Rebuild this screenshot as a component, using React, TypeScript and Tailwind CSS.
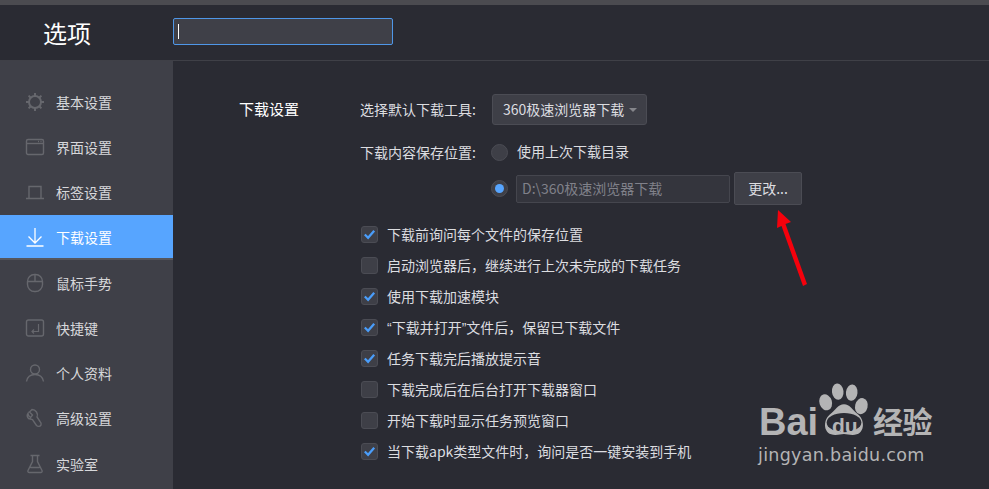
import type { ReactNode } from 'react'

const iconClass = 'w-[20px] h-[20px] text-[#66676d]'

function Svg({ children }: { children: ReactNode }) {
  return (
    <svg viewBox="0 0 20 20" fill="none" stroke="currentColor" strokeWidth="1.4" className={iconClass}>
      {children}
    </svg>
  )
}

const menu: { label: string; icon: ReactNode; active?: boolean }[] = [
  {
    label: '基本设置',
    icon: (
      <Svg>
        <circle cx="10" cy="10" r="6" strokeWidth="2" />
        <path d="M10 1v3M10 16v3M1 10h3M16 10h3M3.600 3.600l2.100 2.100M14.300 14.300l2.100 2.100M3.600 16.400l2.100-2.100M14.300 5.700l2.100-2.100" strokeWidth="2" />
      </Svg>
    ),
  },
  {
    label: '界面设置',
    icon: (
      <Svg>
        <rect x="1.500" y="2.500" width="17" height="15" rx="1.500" />
        <path d="M1.500 6.500h17" />
        <path d="M13 4.500h1M15.500 4.500h1" />
      </Svg>
    ),
  },
  {
    label: '标签设置',
    icon: (
      <Svg>
        <path d="M4 16V4.500h12V16M1 16.500h18" />
      </Svg>
    ),
  },
  {
    label: '下载设置',
    active: true,
    icon: (
      <svg viewBox="0 0 20 20" fill="none" stroke="currentColor" strokeWidth="1.300" className="w-[20px] h-[20px] text-white">
        <path d="M10 1v15M3.500 9.500l6.500 6.500 6.500-6.500M1.500 19h17" />
      </svg>
    ),
  },
  {
    label: '鼠标手势',
    icon: (
      <Svg>
        <rect x="2.500" y="1.500" width="15" height="17" rx="7" />
        <path d="M2.500 8.500h15M10 1.500v7" />
      </Svg>
    ),
  },
  {
    label: '快捷键',
    icon: (
      <Svg>
        <rect x="1.500" y="2" width="17" height="16" rx="2" />
        <path d="M13.500 6v7.500H7M9 11.500l-2 2 2 2" strokeWidth="1.200" />
      </Svg>
    ),
  },
  {
    label: '个人资料',
    icon: (
      <Svg>
        <circle cx="10" cy="6.500" r="4.500" />
        <path d="M1.500 18.500c.8-4.500 4-7 8.500-7s7.700 2.500 8.500 7" />
      </Svg>
    ),
  },
  {
    label: '高级设置',
    icon: (
      <Svg>
        <path d="M7 1.500 4.500 4l3 3-2 2.500C4 8.500 3 7 3 5.500 2 7 2 9 3.500 10.500l4 1 4 6c1.500 1.500 4 1 4.500-.5.500-1.500 0-2.500-1-3.500l-3-4.500c1-2 .5-3.500-.5-5C10.500 2.500 9 1.500 7 1.500Z" />
      </Svg>
    ),
  },
  {
    label: '实验室',
    icon: (
      <Svg>
        <path d="M5.500 1.500h9M7.500 1.500v6L3 16.500c-.5 1 .2 2 1.200 2h11.600c1 0 1.700-1 1.200-2L12.500 7.500v-6M5.500 13.500h9" />
      </Svg>
    ),
  },
]

const quote = "font-['Liberation_Sans',sans-serif]"

const options: { label: ReactNode; checked: boolean }[] = [
  { label: '下载前询问每个文件的保存位置', checked: true },
  { label: '启动浏览器后，继续进行上次未完成的下载任务', checked: false },
  { label: '使用下载加速模块', checked: true },
  {
    label: (
      <>
        <span className={quote}>“</span>下载并打开<span className={quote}>”</span>文件后，保留已下载文件
      </>
    ),
    checked: true,
  },
  { label: '任务下载完后播放提示音', checked: true },
  { label: '下载完成后在后台打开下载器窗口', checked: false },
  { label: '开始下载时显示任务预览窗口', checked: false },
  { label: '当下载apk类型文件时，询问是否一键安装到手机', checked: true },
]

function Radio({ selected }: { selected?: boolean }) {
  return (
    <span className="w-[17px] h-[17px] rounded-full bg-[#3e3f47] border border-[#4b4c54] flex items-center justify-center shrink-0">
      {selected && <span className="w-[9px] h-[9px] rounded-full bg-[#57a5ff]" />}
    </span>
  )
}

function Checkbox({ checked }: { checked: boolean }) {
  return (
    <span className="w-[17px] h-[17px] rounded-[3px] bg-[#3e3f47] border border-[#4b4c54] flex items-center justify-center shrink-0">
      {checked && (
        <svg viewBox="0 0 16 16" fill="none" stroke="#4a9dfa" strokeWidth="2.400" className="w-[15px] h-[15px]">
          <path d="M3 8l3.500 3.500L13 4" />
        </svg>
      )}
    </span>
  )
}

function Watermark() {
  return (
    <div className="absolute left-[758px] top-[382px] w-[200px] text-[#b4b4b5] pointer-events-none">
      <div className="relative h-[62px]">
        <span className="absolute left-[1px] top-[17px] text-[38px] leading-[46px] font-bold font-['Liberation_Sans',sans-serif]">Bai</span>
        <svg viewBox="0 0 56 56" className="absolute left-[59px] top-[0px] w-[54px] h-[56px]" fill="#b4b4b5">
          <ellipse cx="9" cy="20" rx="6.500" ry="8.500" transform="rotate(-18 9 20)" />
          <ellipse cx="21.500" cy="9" rx="6" ry="8.500" transform="rotate(-6 21.500 9)" />
          <ellipse cx="36" cy="10" rx="6" ry="8.500" transform="rotate(6 36 10)" />
          <ellipse cx="46" cy="24" rx="6.500" ry="8.500" transform="rotate(14 46 24)" />
          <path d="M28 22c6 0 9 6 15 11 7 6 7 21-6 21-4 0-6-1-9-1s-5 1-9 1c-13 0-13-15-6-21 6-5 9-11 15-11Z" />
          <ellipse cx="28" cy="41" rx="18" ry="10" fill="#2a2b33" />
        </svg>
        <span className="absolute left-[74px] top-[33px] text-[21px] leading-[22px] font-bold font-['Liberation_Sans',sans-serif]">du</span>
        <span className="absolute left-[115px] top-[20px] text-[30px] leading-[36px] font-bold tracking-[-0.500px] whitespace-nowrap">经验</span>
      </div>
      <div className="text-[17.500px] leading-[22px] tracking-[0.300px] font-['DejaVu_Sans',sans-serif] whitespace-nowrap">jingyan.baidu.com</div>
    </div>
  )
}

export default function App() {
  return (
    <div className="relative w-[989px] h-[489px] overflow-hidden bg-[#2a2b33] text-[#dcdde0] text-[14px] font-['Noto_Sans_CJK_SC','Liberation_Sans',sans-serif]">
      <div className="h-[5px] bg-[#4b4b50]" />
      <header className="h-[56px] flex items-center border-b border-[#3f4047]">
        <h1 className="w-[173px] pl-[43px] text-[24px] leading-none text-white">选项</h1>
        <div className="w-[220px] h-[27px] -mt-[2px] bg-[#3f4048] border border-[#4f97e8] rounded-[2px] flex items-center pl-[4px]">
          <span className="w-px h-[15px] bg-white" />
        </div>
      </header>
      <div className="flex h-[428px]">
        <nav className="w-[173px] shrink-0 bg-[#3f4048] pt-[18.500px]">
          {menu.map((item) => (
            <div
              key={item.label}
              className={`h-[45.200px] flex items-center gap-[11px] pl-[25px] ${
                item.active ? 'bg-[#57a5ff] text-white border-b-2 border-[#55565c]' : 'text-[#d7d8db]'
              }`}
            >
              {item.icon}
              <span className="leading-none">{item.label}</span>
            </div>
          ))}
        </nav>
        <main className="flex-1 pl-[66px] pt-[33px] flex">
          <h2 className="w-[121px] shrink-0 text-[15px] leading-[30px] text-white">下载设置</h2>
          <div className="flex flex-col">
            <div className="flex items-center h-[31px]">
              <span className="w-[132px] whitespace-nowrap">选择默认下载工具:</span>
              <div className="w-[155px] h-[31px] bg-[#3e3f47] border border-[#4b4c54] rounded-[3px] flex items-center pl-[10px] gap-[5px]">
                <span className="whitespace-nowrap">360极速浏览器下载</span>
                <span className="w-0 h-0 border-x-[4px] border-x-transparent border-t-[4px] border-t-[#85868b]" />
              </div>
            </div>
            <div className="flex items-center mt-[19px] h-[17px]">
              <span className="w-[131px] whitespace-nowrap">下载内容保存位置:</span>
              <Radio />
              <span className="ml-[9px] -mt-[3px] whitespace-nowrap">使用上次下载目录</span>
            </div>
            <div className="flex items-center mt-[11px] ml-[131px] h-[33px]">
              <Radio selected />
              <div className="ml-[8px] w-[214px] h-[28px] bg-[#34353d] border border-[#45464e] rounded-[2px] flex items-center pl-[5px] text-[#80818a] whitespace-nowrap">
                D:\360极速浏览器下载
              </div>
              <button className="ml-[4px] w-[68px] h-[33px] bg-[#3e3f47] border border-[#4b4c54] rounded-[2px] text-[#dcdde0]">更改...</button>
            </div>
            <ul className="mt-[21px] flex flex-col gap-[14px] ml-px">
              {options.map((o, i) => (
                <li key={i} className="flex items-center gap-[9px] h-[17px] whitespace-nowrap">
                  <Checkbox checked={o.checked} />
                  <span>{o.label}</span>
                </li>
              ))}
            </ul>
          </div>
        </main>
      </div>
      <svg viewBox="0 0 60 90" className="absolute left-[765px] top-[205px] w-[60px] h-[90px]" fill="#f5010c">
        <path d="M13 5 26 17 20.500 19 42 79 38 81 16.500 21 12 23Z" />
      </svg>
      <Watermark />
    </div>
  )
}
